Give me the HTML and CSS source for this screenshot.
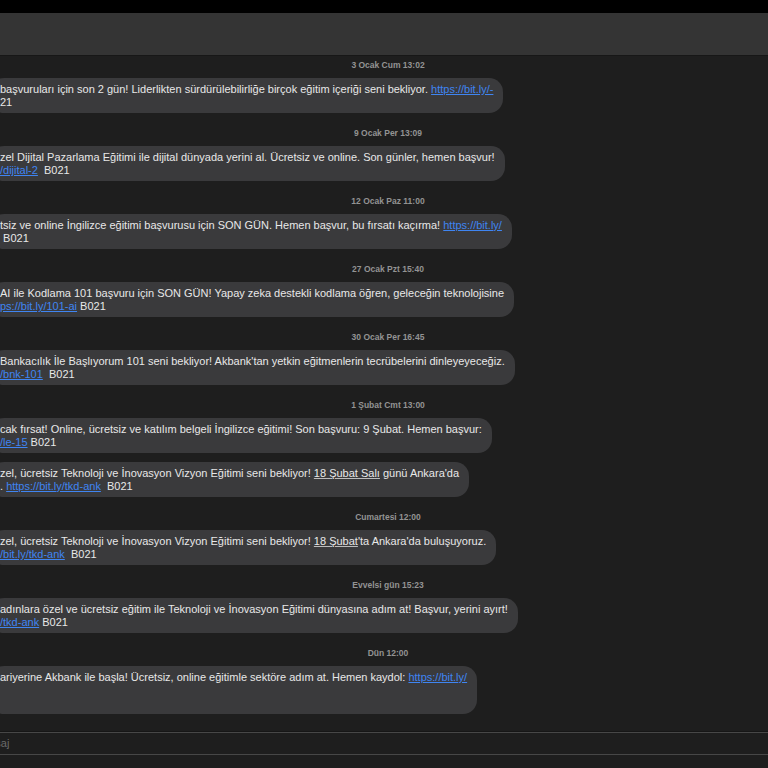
FILE: index.html
```html
<!DOCTYPE html>
<html lang="tr">
<head>
  <meta charset="UTF-8" />
  <meta name="viewport" content="width=device-width, initial-scale=1.0"/>
  <title>Mesajlar</title>
  <link rel="stylesheet" href="styles.css">
</head>
<body>
  <div class="topbar"></div>
  <div class="header"></div>

  <div class="transcript">
    <div class="stamp">3 Ocak Cum 13:02</div>
    <div class="bubble">
      <span class="line">başvuruları için son 2 gün! Liderlikten sürdürülebilirliğe birçok eğitim içeriği seni bekliyor. <a href="#">https://bit.ly/-</a></span>
      <span class="line">21</span>
    </div>

    <div class="stamp">9 Ocak Per 13:09</div>
    <div class="bubble">
      <span class="line">zel Dijital Pazarlama Eğitimi ile dijital dünyada yerini al. Ücretsiz ve online. Son günler, hemen başvur!</span>
      <span class="line"><a href="#">/dijital-2</a>&nbsp; B021</span>
    </div>

    <div class="stamp">12 Ocak Paz 11:00</div>
    <div class="bubble">
      <span class="line">tsiz ve online İngilizce eğitimi başvurusu için SON GÜN. Hemen başvur, bu fırsatı kaçırma! <a href="#">https://bit.ly/</a></span>
      <span class="line">&nbsp;B021</span>
    </div>

    <div class="stamp">27 Ocak Pzt 15:40</div>
    <div class="bubble">
      <span class="line">AI ile Kodlama 101 başvuru için SON GÜN! Yapay zeka destekli kodlama öğren, geleceğin teknolojisine</span>
      <span class="line"><a href="#">ps://bit.ly/101-ai</a> B021</span>
    </div>

    <div class="stamp">30 Ocak Per 16:45</div>
    <div class="bubble">
      <span class="line">Bankacılık İle Başlıyorum 101 seni bekliyor! Akbank'tan yetkin eğitmenlerin tecrübelerini dinleyeyeceğiz.</span>
      <span class="line"><a href="#">/bnk-101</a>&nbsp; B021</span>
    </div>

    <div class="stamp">1 Şubat Cmt 13:00</div>
    <div class="bubble">
      <span class="line">cak fırsat! Online, ücretsiz ve katılım belgeli İngilizce eğitimi! Son başvuru: 9 Şubat. Hemen başvur:</span>
      <span class="line"><a href="#">/le-15</a> B021</span>
    </div>
    <div class="bubble next">
      <span class="line">zel, ücretsiz Teknoloji ve İnovasyon Vizyon Eğitimi seni bekliyor! <u>18 Şubat Salı</u> günü Ankara'da</span>
      <span class="line">. <a href="#">https://bit.ly/tkd-ank</a>&nbsp; B021</span>
    </div>

    <div class="stamp">Cumartesi 12:00</div>
    <div class="bubble">
      <span class="line">zel, ücretsiz Teknoloji ve İnovasyon Vizyon Eğitimi seni bekliyor! <u>18 Şubat</u>'ta Ankara'da buluşuyoruz.</span>
      <span class="line"><a href="#">/bit.ly/tkd-ank</a>&nbsp; B021</span>
    </div>

    <div class="stamp">Evvelsi gün 15:23</div>
    <div class="bubble">
      <span class="line">adınlara özel ve ücretsiz eğitim ile Teknoloji ve İnovasyon Eğitimi dünyasına adım at! Başvur, yerini ayırt!</span>
      <span class="line"><a href="#">/tkd-ank</a> B021</span>
    </div>

    <div class="stamp">Dün 12:00</div>
    <div class="bubble">
      <span class="line">ariyerine Akbank ile başla! Ücretsiz, online eğitimle sektöre adım at. Hemen kaydol: <a href="#">https://bit.ly/</a></span>
      <span class="line">&nbsp;</span>
      <span class="line">&nbsp;</span>
    </div>
  </div>

  <div class="composer">
    <div class="field">Mesaj</div>
  </div>
</body>
</html>
```

FILE: styles.css
```css
* {
  box-sizing: border-box;
  margin: 0;
  padding: 0;
}

html, body {
  height: 100%;
}

body {
  background-color: #1e1e1e;
  color: #e8e8e8;
  font-family: "Liberation Sans", Arial, sans-serif;
  font-size: 11px;
  overflow: hidden;
  display: flex;
  flex-direction: column;
}

.topbar {
  height: 13px;
  background-color: #000;
}

.header {
  height: 43px;
  background-color: #343434;
  border-bottom: 1px solid #171717;
}

.transcript {
  display: flex;
  flex-direction: column;
  padding-top: 3px;
  flex: 1;
}

.stamp {
  height: 12px;
  line-height: 12px;
  margin-bottom: 7px;
  padding-left: 8px;
  text-align: center;
  font-size: 8.5px;
  font-weight: bold;
  color: #939393;
}

.bubble {
  align-self: flex-start;
  margin-left: -10px;
  margin-bottom: 14px;
  padding: 5px 10px 4px 10px;
  background-color: #3a3a3c;
  border-radius: 14px;
  line-height: 13px;
  white-space: nowrap;
}

.bubble.next {
  margin-top: -5px;
}

.line {
  display: block;
}

.bubble a {
  color: #3f85f2;
  text-decoration: underline;
}

.bubble u {
  text-decoration-color: #bdbdbd;
}

.composer {
  height: 37px;
  border-top: 1px solid #161616;
}

.field {
  margin-left: -40px;
  margin-right: -40px;
  height: 23px;
  padding-left: 20px;
  line-height: 21px;
  border-top: 1px solid #474747;
  border-bottom: 1px solid #474747;
  color: #6a6a6a;
  font-size: 11px;
  white-space: nowrap;
}
```
